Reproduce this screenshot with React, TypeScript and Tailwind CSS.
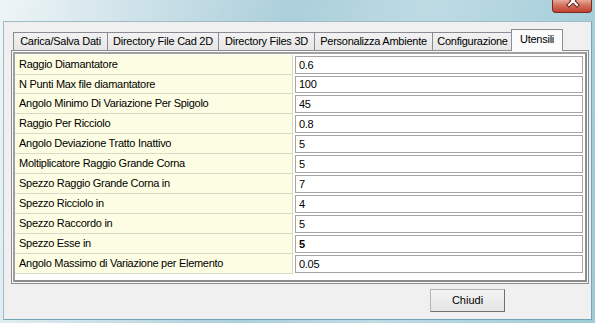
import React from "react";

const rows: { label: string; value: string; bold?: boolean; h: string }[] = [
  { label: "Raggio Diamantatore", value: "0.6", h: "h-[20px]" },
  { label: "N Punti Max file diamantatore", value: "100", h: "h-[19px]" },
  { label: "Angolo Minimo Di Variazione Per Spigolo", value: "45", h: "h-[20px]" },
  { label: "Raggio Per Ricciolo", value: "0.8", h: "h-[20px]" },
  { label: "Angolo Deviazione Tratto Inattivo", value: "5", h: "h-[20px]" },
  { label: "Moltiplicatore Raggio Grande Corna", value: "5", h: "h-[20px]" },
  { label: "Spezzo Raggio Grande Corna in", value: "7", h: "h-[20px]" },
  { label: "Spezzo Ricciolo in", value: "4", h: "h-[20px]" },
  { label: "Spezzo Raccordo in", value: "5", h: "h-[20px]" },
  { label: "Spezzo Esse in", value: "5", bold: true, h: "h-[20px]" },
  { label: "Angolo Massimo di Variazione per Elemento", value: "0.05", h: "h-[20px]" },
];

const tabs: { label: string; w: string }[] = [
  { label: "Carica/Salva Dati", w: "w-[94px]" },
  { label: "Directory File Cad 2D", w: "w-[111px]" },
  { label: "Directory Files 3D", w: "w-[96px]" },
  { label: "Personalizza Ambiente", w: "w-[118px]" },
  { label: "Configurazione", w: "w-[81px]" },
];

export default function App() {
  return (
    <div
      className="w-[595px] h-[323px] overflow-hidden flex flex-col bg-[linear-gradient(100deg,#eef5f7_0%,#d0e3ea_20%,#abcfdb_45%,#bedbe4_66%,#9ecbd7_100%)] text-black"
      style={{ fontFamily: '"Liberation Sans", Arial, sans-serif' }}
    >
      {/* title bar */}
      <div className="h-[21px] flex justify-end pr-[3px] shrink-0">
        <div className="w-[40px] h-[13px] rounded-b-[4px] border border-t-0 border-[#7a2a20] bg-[linear-gradient(180deg,#e9a898_0%,#d4715f_45%,#c2402e_100%)] overflow-hidden">
          <svg width="40" height="13" viewBox="0 0 40 13">
            <path d="M16 -3 L24 5 M24 -3 L16 5" stroke="#5a1a10" strokeWidth="4" strokeLinecap="square" />
            <path d="M16 -3 L24 5 M24 -3 L16 5" stroke="#ffffff" strokeWidth="2.2" strokeLinecap="square" />
          </svg>
        </div>
      </div>

      {/* client area */}
      <div className="flex-1 mx-[3px] mb-[3px] bg-[#f0f0f0] border border-[#6fa6b8] border-l-[#9fbcc6] border-t-[#9fbcc6] flex flex-col">
        {/* tab strip */}
        <div className="flex items-end h-[28px] pl-[9px] pt-[7px] text-[11px] leading-none tracking-[-0.25px]">
          {tabs.map((t, i) => (
            <div
              key={t.label}
              className={`${t.w} h-[18px] flex items-center justify-center border-t border-l border-[#898c95] bg-[linear-gradient(180deg,#f2f2f2,#e6e6e6)] ${i === tabs.length - 1 ? "border-r" : ""}`}
            >
              {t.label}
            </div>
          ))}
          <div className="w-[52px] h-[22px] -ml-[2px] -mb-px relative z-10 flex items-center justify-center pb-[3px] border border-b-0 border-[#898c95] bg-[#fbfbfb]">
            Utensili
          </div>
        </div>

        {/* tab page */}
        <div className="ml-[7px] mr-[2px] h-[234px] border border-[#898c95] bg-[#f9f9f9] p-px">
          <div className="h-full border-2 border-[#8a8a8a] border-t-[#a0a0a0] border-l-[#a0a0a0] bg-white flex flex-col pt-px text-[11px] leading-none tracking-[-0.28px]">
            {rows.map((r) => (
              <div key={r.label} className={`${r.h} flex`}>
                <div className="w-[278px] flex items-center pl-[4px] bg-[#fdfde3] border-r border-b border-[#d9d9c6]">
                  {r.label}
                </div>
                <div className="w-[2px]" />
                <div className="w-[288px] my-px flex items-center pl-[3px] border border-[#a5a5a5] bg-white">
                  <span className={r.bold ? "font-bold" : ""}>{r.value}</span>
                </div>
              </div>
            ))}
          </div>
        </div>

        {/* footer */}
        <div className="flex justify-end pr-[86px] pt-[5px]">
          <button className="w-[75px] h-[23px] text-[11px] leading-none border border-[#b4b4b4] border-r-[#707070] border-b-[#707070] bg-[linear-gradient(180deg,#f4f4f4,#e4e4e4)] flex items-center justify-center">
            Chiudi
          </button>
        </div>
      </div>
    </div>
  );
}
